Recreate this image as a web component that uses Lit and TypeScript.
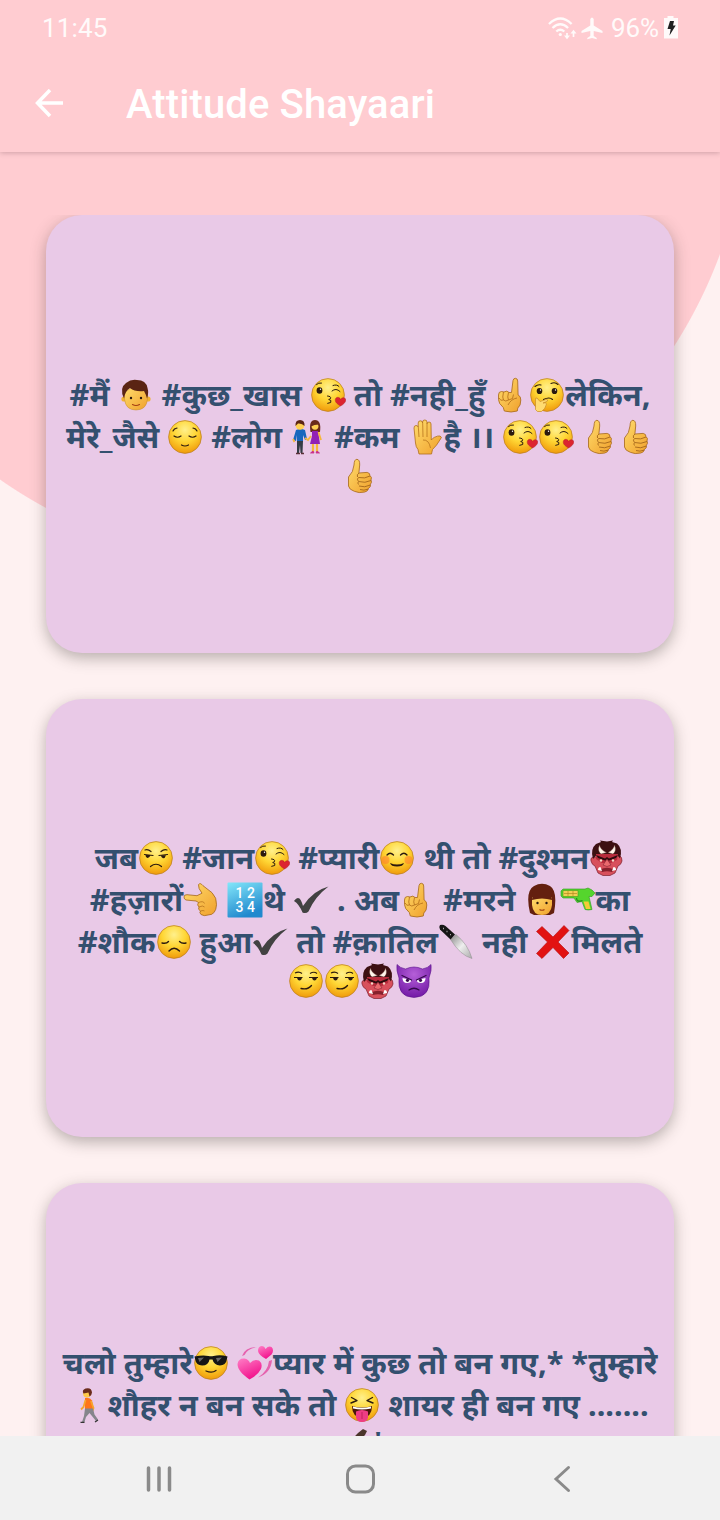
import { LitElement, html, svg, css, SVGTemplateResult } from "lit";
import { customElement } from "lit/decorators.js";

const INK = "#2b1a0e";
const disc = svg`<circle cx="18" cy="18" r="16.4" fill="url(#face)" stroke="#b87a1c" stroke-width=".7"/>`;
const kiss = svg`${disc}<ellipse cx="9.500" cy="13.500" rx="2.900" ry="3.200" fill="${INK}"/><circle cx="10.500" cy="12.3" r=".7" fill="#fff"/>
  <path d="M6.500 7.500q2-2 5-1.500M22 14q4-3.500 8 .5M23 8.500q4-1.500 6 1" fill="none" stroke="${INK}" stroke-width="1" stroke-linecap="round"/>
  <path d="M17.500 19q4 .3 3 2.700l-1.800.8q3.300.5 2 3l-3 .8" fill="none" stroke="${INK}" stroke-width="1" stroke-linecap="round"/>
  <path d="M30.500 29c-4-2.300-5.500-4.200-5.200-6.500.6-3 4.300-2.700 5.200-.2 1.800-2.600 5.500-1.800 5.300.8-.2 2.200-2.300 4.500-5.300 5.900z" fill="#dc2430" stroke="#a9131f" stroke-width=".4"/>`;
const ogre = svg`<path d="M4 17q-3 1-2 4 1 4 4 5l3 7 5 2.500h7l5-2.500 3-7q3-1 4-5 0-4-2-5z" fill="#d8505c" stroke="#7d1f2c" stroke-width=".7"/>
  <path d="M4 19Q1 9 7 4l5-2-1-1.500 7 1 6-1-1 1.500 5 1.500q6 5 3 15l-3-4H8z" fill="#3d1012"/>
  <path d="M7 14l22 0-1 6-6 3h-9l-6-4z" fill="#b82c3c"/>
  <path d="M12 14Q8 11 10.500 5q1 5 7 7.500zM24 14q4-3 1.500-9-1 5-6.500 7.500z" fill="#fff6ea" stroke="#6b3b32" stroke-width=".4"/>
  <path d="M7 15l9 3.500 2-1.500 2 1.500 9-3.500-2 3-7 2.500h-4L9 18z" fill="#2c0b0d"/><circle cx="12" cy="20.500" r="1.200" fill="#f6d9c9"/><circle cx="24" cy="20.500" r="1.200" fill="#f6d9c9"/>
  <path d="M18 19l4 6q-4 3-8 0z" fill="#ea6a6e" stroke="#852232" stroke-width=".6"/><path d="M11 29.500q7-3.500 14 0l-2 2.500q-5-1.500-10 0z" fill="#86202c"/>
  <path d="M9 30q0-3 2.500-3l1.500 4zM27 30q0-3-2.500-3L23 31z" fill="#fff"/>`;
const smirk = svg`${disc}<path d="M7 10q4-2 7 .5M22 10.500q4-2.500 7 0" fill="none" stroke="${INK}" stroke-width="1.100"/>
  <path d="M6 14.500h8.500M21 14.500h9" stroke="${INK}" stroke-width="1.200"/><path d="M9 14.500h5q-.5 3-2.500 3T9 14.500zM24 14.500h5q-.5 3-2.500 3T24 14.500z" fill="${INK}"/>
  <path d="M13 25.500q7 1.500 10.500-3" fill="none" stroke="${INK}" stroke-width="1.300" stroke-linecap="round"/>`;
const check = svg`<path d="M1 19q3-4.500 5.500-2.500 2 2 3.500 7.500Q20 8.500 35.500 4.500 22 14.500 15.500 29.500q-2.500 2.500-6 1Q6 22 1 19z" fill="#424242"/>`;
const pointUp = svg`<path d="M5.500 18q0-3.500 3-3.500l2.500.5q3-2 5 .5h2.500l1.500-12q.5-2.300 2.500-2.200 2.200.2 2.200 2.700l.4 14q2.700 1 2.700 5 0 6-3 8l-.5 3q-6 2-13 0l-1-3.500q-4.800-4-4.800-8z" fill="url(#skin)" stroke="#a5671b" stroke-width=".8"/>
  <path d="M10.500 15q-1.500 6 0 8M15.500 15.500q-1.500 5 0 7.500M6 21q1.500 3.500 4.500 2 2 2 5 0l4-1.500 1-4M15 28q3-6 9-7" fill="none" stroke="#b8741d" stroke-width=".9"/>`;

const glyphs: Record<string, SVGTemplateResult> = {
  kiss, ogre, smirk, check, up: pointUp,
  man: svg`<circle cx="6" cy="22" r="2.600" fill="#f2b233"/><circle cx="30" cy="22" r="2.600" fill="#f2b233"/><path d="M6.500 15q11.500-9 23 0v7q-1 11-11.500 11T6.500 22z" fill="url(#skin)" stroke="#c58a28" stroke-width=".5"/>
  <path d="M6 21.500Q1 11 8 6q5-4 11-3 9 0 10.500 8 1.500 5-.5 10.500-1-4-3-7.500-9 1-14-3-5 3-6 10.500z" fill="#5a2413"/><circle cx="13" cy="21" r="1.200" fill="${INK}"/><circle cx="23" cy="21" r="1.200" fill="${INK}"/><path d="M14.500 27.500q3.500 2 7 0" fill="none" stroke="#a33e12" stroke-width="1.100" stroke-linecap="round"/>`,
  think: svg`${disc}<ellipse cx="10.500" cy="14" rx="2.800" ry="3.100" fill="${INK}"/><ellipse cx="25.500" cy="14" rx="2.800" ry="3.100" fill="${INK}"/><circle cx="11.500" cy="13" r=".7" fill="#fff"/><circle cx="26.500" cy="13" r=".7" fill="#fff"/><path d="M6 9.500q3-2.500 6-1.500M22 6.500q4-2 7 1M14.500 22.500q6-3 9 0" fill="none" stroke="${INK}" stroke-width="1.100" stroke-linecap="round"/>
  <path d="M6.500 23q-.5-2.500 1.500-2l3 3.500 6-2q3 0 1 2l-4 1.500q3.500-1 3.500 1-1 5-5 7.500-5 1-6-2z" fill="#ffdb70" stroke="#c98a2a" stroke-width=".7"/>`,
  relief: svg`${disc}<path d="M7 17q3.500 2.500 7 0M22 17q3.500 2.500 7 0M6 12q1-2.500 4-3M26 9q3 .5 4 3M14.500 26q3.500 2 7 0" fill="none" stroke="${INK}" stroke-width="1.200" stroke-linecap="round"/>`,
  couple: svg`<path d="M6 11q5-2 9 0l2 9-2 1-2-5v7H7v-7l-1 6-3-1z" fill="#1767bd"/><path d="M7 22h6l-.5 12h-2L10 26l-1 8H7z" fill="#343c45"/><path d="M3 20l1.500 3M15 19l3 2 3-4" fill="none" stroke="#f6b73a" stroke-width="1.800"/>
  <circle cx="10" cy="6.500" r="4.300" fill="#ffd052"/><path d="M5.500 7Q5 1 10 1t4.500 6Q12 4 8 4.500z" fill="#5a2413"/>
  <path d="M20.500 13q-2-12 4.500-12t5 12z" fill="#6b2b1b"/><circle cx="25" cy="7.300" r="3.400" fill="#ffd052"/><path d="M21 4.500q4-4.500 8 1-5 0-8 2z" fill="#6b2b1b"/>
  <path d="M22 12h6l2 13H20l2-8z" fill="#9121b5"/><path d="M28.500 13l2.500 8" stroke="#f6b73a" stroke-width="1.800"/><path d="M23 25v8M27 25v8" stroke="#f6b73a" stroke-width="2.200"/><path d="M20.500 34l2.500-2 1 2zM26 34l1-2 2.500 2z" fill="#d42f92" stroke="#c22988" stroke-width=".8"/><path d="M6 34.500h4M11 34.500h3" stroke="#5b3038" stroke-width="1.300"/>`,
  hand: svg`<path d="M7.500 24L6 9q0-2.500 2-2.500T10.200 8V4q0-2.200 2.200-2.200t2.200 2.200V3q0-2 2.200-2T19 3v2q0-2 2-2t2 2l.3 16q1-1.500 3-2.600Q30 16.500 32 17q2.500 1 .5 3-4 7-8 10.500l-1 4.500H11l-1-4.500q-2.200-2.500-2.500-6.500z" fill="url(#skin)" stroke="#b06f1c" stroke-width=".8"/><path d="M10.300 8l.7 10M14.700 4l.3 14M19 5v13M15 21q6-.5 7.500 8" fill="none" stroke="#b8741d" stroke-width=".8"/>`,
  thumb: svg`<path d="M6.500 19q5-5 5.500-12 .2-5.700 2.900-5.700 3 .2 2.800 5.700l-.8 8 8.300-.6q3 .6 2.800 3.300 2.300 1.300 1 4.300 1.400 2.300-.6 4.300.6 3-2 4-.3 3-3.600 3.700-6 1.500-10.500-.7Q7 31.500 6.500 28z" fill="url(#skin)" stroke="#a5671b" stroke-width=".8"/>
  <path d="M17 15q-2.500 1.500-1.500 4M28 18q-5 3-11.500 1.500-2 1.500-.3 3.500M29 22.500q-6 3-12.500 1-1.300 1.500 0 3M28.500 27q-6 3-11.500 1M26.600 31q-5 2-8.600.5" fill="none" stroke="#a5671b" stroke-width=".9"/>`,
  unamused: svg`${disc}<path d="M7 10q3-1 6 1.500M23 11.500q3-2.500 6-1.500M6.500 14.500l8.500 1M21 15.500l8.500-1M12.500 26.500q5.500-4.500 11 0" fill="none" stroke="${INK}" stroke-width="1.200" stroke-linecap="round"/><path d="M7.500 15h5q-1 3.200-3 3t-2-3zM23 15.300h5q-1 3.200-3 3t-2-3z" fill="${INK}"/>`,
  blush: svg`${disc}<circle cx="6.500" cy="20" r="4" fill="#ff7b2f" opacity=".55"/><circle cx="29.500" cy="20" r="4" fill="#ff7b2f" opacity=".55"/><path d="M8 15q3-3.500 6.500 0M21.500 15q3.500-3.500 6.500 0" fill="none" stroke="${INK}" stroke-width="1.300" stroke-linecap="round"/><path d="M11 23q7 3 14 0-1 3.600-7 3.600T11 23z" fill="${INK}"/>`,
  left: svg`<path d="M1 15q0-2.500 3-2.300l10 1 5-2.500q-4-5-3.500-8.500 1.500-2.600 4.500 1l9 7q5 5 4.500 12Q33 33 25 33q-4 1.500-7-.5-2-2-.5-3.500-3-1.500-1.500-4-2.500-2-.5-4.500L13 19l-10-1q-2-.7-2-3z" fill="url(#skin)" stroke="#a5671b" stroke-width=".8"/><path d="M15.500 20.500q5-2 6 1M16 25q4-2 5.500 0M17.500 29q3-1 4 0" fill="none" stroke="#b8741d" stroke-width=".8"/>`,
  numbers: svg`<rect x=".5" y=".5" width="35" height="35" rx="1" fill="url(#blue)"/><text class="digits" x="12.500" y="15.500">1</text><text class="digits" x="24" y="15.500">2</text><text class="digits" x="12.500" y="29.500">3</text><text class="digits" x="24" y="29.500">4</text>`,
  woman: svg`<path d="M6 31Q1 9 10 4q8-4.500 16 0 8 5 4 27l-4 2H10z" fill="#64200f"/><path d="M8 15h20v8q-1 10-10 10T8 23z" fill="url(#skin)"/><path d="M8 18l1-9h18l1 9q-10-3-20 0z" fill="#64200f"/><circle cx="13.500" cy="21" r="1.200" fill="${INK}"/><circle cx="22.500" cy="21" r="1.200" fill="${INK}"/><path d="M15.500 27.500q2.500 1.500 5 0" fill="none" stroke="#a33e12" stroke-width="1.200"/>`,
  gun: svg`<path d="M1 9l2-2h22l3-1 4 2 3 3-3 3.500h-3l3 13q-4 1-7 0l-3-8-5 1-3-4.500H3L1 14z" fill="#55d52d" stroke="#319a1c" stroke-width=".6"/><path d="M3 8.500h15v6H3z" fill="#f3cf55" stroke="#4a9c1b" stroke-width=".6"/><path d="M4 11.500h13M8 9v5M13 9v5" stroke="#b38a20" stroke-width=".7"/><path d="M23.500 19.500h5l2 7.500h-4.500z" fill="#f4cb35"/><path d="M16.500 16q0 4.500 6 2.500" fill="none" stroke="#258b22" stroke-width="1.200"/>`,
  sad: svg`${disc}<path d="M6 19q4.500 1 6.500-1.500M23.500 17.500q2.500 2.500 6.500 1.500M13 27q5-5.500 10.500 0" fill="none" stroke="${INK}" stroke-width="1.400" stroke-linecap="round"/>`,
  knife: svg`<path d="M12.500 15.500l5.500-5q12 10 16 24-11.500-3-21.500-19z" fill="url(#steel)" stroke="#8b8b8b" stroke-width=".5"/><path d="M2 1q3-1 5.500 1l9.500 8.500-4.500 5L2 5.500q-1.500-2.500 0-4.500z" fill="#161616"/><path d="M5 4.500h1M8.500 7.500h1M12 10.700h1" stroke="#aaa" stroke-width="1.300"/>`,
  cross: svg`<path d="M1.500 7.500l5.500-5 11 10.500L29 1.500l5 5-11 11.500 11 11-5.500 5.500L18 23.500 7 34.500l-5.500-5L12.500 18z" fill="#e21212" stroke="#b30b0b" stroke-width=".6"/>`,
  imp: svg`<path d="M3 15Q0 7 1 1.500 4 5 9.500 6q8.500-4 17 0 5.500-1 8.500-4.500 1 5.500-2 13.500 2 19-15 19.500Q1 34 3 15z" fill="url(#violet)" stroke="#5b148c" stroke-width=".6"/><path d="M6.500 15q0 5 4.500 5t4-3zM29.500 15q0 5-4.500 5t-4-3z" fill="#fff"/><path d="M6 12.500l9.500 4.500M30 12.500L20.500 17M13 27q5-3.500 10 0" fill="none" stroke="#35094c" stroke-width="1.300" stroke-linecap="round"/><circle cx="11.500" cy="17.300" r="1.600" fill="#35094c"/><circle cx="24.500" cy="17.300" r="1.600" fill="#35094c"/>`,
  cool: svg`${disc}<path d="M1.500 11.500q8-1.500 14-.5 2.500.5 5 0 7-1.500 14 .5l-.6 2.500q-1 6.500-7 6.500-6-.5-7.400-6h-3q-1 6-7.400 6-6 0-7-6.500z" fill="#151515"/><path d="M5 13l6-.5-4.500 4.500zM23 13l6-.5-4.500 4.500z" fill="#666"/><path d="M13 26q6 2.500 10-.5" fill="none" stroke="${INK}" stroke-width="1.300" stroke-linecap="round"/>`,
  hearts: svg`<path d="M12.500 34.500C5 29 .5 24.500.5 19q1-6 7-5.500 4 .5 5.500 4.500 4-4.500 9-2.500 4 3 2 8.500-3 6-11.500 10.500z" fill="url(#rose)"/><path d="M29 14q-7.500-4-8-8 0-4.500 3.500-5 3 0 4 3 3-3.500 6-2 3 3 0 7.500z" fill="url(#rose)"/><path d="M5 11Q8 2 20 2 10 4 7.500 10zM35 15q-1 13-14 17.500Q31 26 32 16z" fill="#e562ae"/>`,
  walk: svg`<circle cx="16" cy="6.500" r="3.900" fill="#ffc848"/><path d="M12.500 6.500Q10.500 3 14.500 1.500q6-1.500 6.500 4 0 2-2.500 4l-1-4z" fill="#6b2b1b"/><path d="M14 11q5-1 7 2.500L22.500 22H14z" fill="#ff7519"/><path d="M14.500 13l-2 7-2.500 2.500M20 14l2.500 7-1 3" fill="none" stroke="#f5a62d" stroke-width="1.800"/>
  <path d="M14 21.500h8l1.500 6 3.500 5-2 1.500-6.500-8-3.500 4-1.500 5H11l2-6z" fill="#85858c"/><path d="M9.500 35.500h4M24 35l3-2" stroke="#333" stroke-width="1.300"/>`,
  tongue: svg`${disc}<path d="M7.500 10.500l5.500 3-6 2.500M28.500 10.500l-5.500 3 6 2.500" fill="none" stroke="${INK}" stroke-width="1.400" stroke-linecap="round" stroke-linejoin="round"/><path d="M8 19q10 3 20 0 0 11-10 12Q8 30 8 19z" fill="#4b160c"/><path d="M9 19.500q9 2.500 18 0v2q-9 2-18 0z" fill="#fff"/><path d="M12 24.500q6-3 12 0v6q-1 4.500-6 4.500t-6-4.500z" fill="#ee3d84"/><path d="M18 25v7" stroke="#c4215f"/>`,
  pen: svg`<path d="M3 33Q14 17 24 7l5-4 4 2-2 4-20 20z" fill="#4b352b"/>`,
};

type Part = string | { e: string };
const E = (e: string): Part => ({ e });

const cards: Part[][][] = [
  [
    ["#मैं ", E("man"), " #कुछ_खास ", E("kiss"), " तो #नही_हुँ ", E("up"), E("think"), "लेकिन,"],
    ["मेरे_जैसे ", E("relief"), " #लोग ", E("couple"), " #कम ", E("hand"), "है ।। ", E("kiss"), E("kiss"), " ", E("thumb"), E("thumb")],
    [E("thumb")],
  ],
  [
    ["जब", E("unamused"), " #जान", E("kiss"), " #प्यारी", E("blush"), " थी तो #दुश्मन", E("ogre")],
    ["#हज़ारों", E("left"), " ", E("numbers"), "थे ", E("check"), " . अब", E("up"), " #मरने ", E("woman"), E("gun"), "का"],
    ["#शौक", E("sad"), " हुआ", E("check"), " तो #क़ातिल", E("knife"), " नही ", E("cross"), "मिलते"],
    [E("smirk"), E("smirk"), E("ogre"), E("imp")],
  ],
  [
    ["चलो तुम्हारे", E("cool"), " ", E("hearts"), "प्यार में कुछ तो बन गए,* *तुम्हारे"],
    [E("walk"), "शौहर न बन सके तो ", E("tongue"), " शायर ही बन गए ......."],
    [E("pen"), "*"],
  ],
];

const isShort = (line: Part[]) => line.every((p) => typeof p !== "string" || p === "*");

@customElement("app-root")
export class AppRoot extends LitElement {
  static styles = css`
    :host { display: flex; flex-direction: column; width: 720px; height: 1520px; overflow: hidden; background: #fef1f1; font-family: Roboto, sans-serif; }
    .defs { width: 0; height: 0; display: block; }
    .top { flex: none; background: #ffccd1; box-shadow: 0 1px 5px rgba(70, 40, 50, .26); z-index: 1; }
    .status { height: 56px; box-sizing: border-box; padding: 0 41px 0 42px; display: flex; align-items: center; justify-content: space-between; color: #fffafa; font-size: 26px; letter-spacing: .15px; }
    .tray { display: flex; align-items: center; }
    .tray svg { display: block; }
    .pct { margin: 0 4px 0 6px; letter-spacing: -.1px; }
    .bar { height: 96px; box-sizing: border-box; padding: 0 34px; display: flex; align-items: center; gap: 62px; color: #fff; }
    h1 { margin: 0; padding-top: 2px; font-size: 40px; font-weight: 500; letter-spacing: .12px; line-height: 48px; }
    main { flex: 1; min-height: 0; display: flex; flex-direction: column; padding-top: 63px; background: radial-gradient(circle at 273px -63px, #ffccd1 476px, #fef1f1 477px); }
    .list { flex: 1; min-height: 0; overflow: hidden; display: flex; flex-direction: column; gap: 46px; padding: 0 46px; }
    .card { flex: none; height: 438px; border-radius: 36px; background: #e9c9e7; box-shadow: 0 5px 15px rgba(50, 45, 40, .34); display: flex; flex-direction: column; align-items: center; justify-content: center; color: #34506f; font-family: "Noto Sans", "Noto Sans Devanagari", sans-serif; font-size: 30.8px; font-weight: 700; }
    .line { height: 42px; display: flex; align-items: center; white-space: pre; line-height: 42px; }
    .line.short { height: 36px; }
    .words { padding-bottom: 3px; }
    .emoji { width: 36px; height: 36px; flex: none; display: block; }
    .digits { font: 500 14px Roboto, sans-serif; fill: #fff; text-anchor: middle; }
    nav { height: 84px; flex: none; box-sizing: border-box; padding: 1px 0 0 1px; background: #f1f1f1; display: flex; justify-content: center; align-items: center; gap: 170px; z-index: 1; }
    nav svg { display: block; }
  `;

  private part(p: Part) {
    return typeof p === "string"
      ? html`<span class="words">${p}</span>`
      : html`<svg class="emoji" viewBox="0 0 36 36">${glyphs[p.e]}</svg>`;
  }

  render() {
    return html`
      <svg class="defs"><defs>
        <radialGradient id="face" cx=".5" cy=".28" r=".72"><stop offset="0" stop-color="#fff08c"/><stop offset=".5" stop-color="#ffd634"/><stop offset="1" stop-color="#f09a0b"/></radialGradient>
        <linearGradient id="skin" x2="1" y2="1"><stop stop-color="#ffdc6c"/><stop offset="1" stop-color="#f0a02c"/></linearGradient>
        <linearGradient id="blue" x2=".4" y2="1"><stop stop-color="#83e7fa"/><stop offset="1" stop-color="#2189ce"/></linearGradient>
        <linearGradient id="steel" x2="1" y2="1"><stop stop-color="#888"/><stop offset=".5" stop-color="#eee"/><stop offset="1" stop-color="#aaa"/></linearGradient>
        <radialGradient id="violet" cx=".5" cy=".3" r=".7"><stop stop-color="#b55fd8"/><stop offset="1" stop-color="#731aa6"/></radialGradient>
        <linearGradient id="rose" x2=".5" y2="1"><stop stop-color="#ff7fc6"/><stop offset="1" stop-color="#f2128d"/></linearGradient>
      </defs></svg>
      <div class="top">
        <div class="status">
          <span>11:45</span>
          <div class="tray">
            <svg width="32" height="24" viewBox="0 0 32 24" fill="none" stroke="#fffafa" stroke-width="2.300"><path d="M2 8Q13.300 -3 24.600 8M5.500 12q7.800-7.500 15.600 0M9.300 15.500q4-3.500 8 0"/><circle cx="13.300" cy="18.500" r="1.600" fill="#fffafa" stroke="none"/><path d="M20 17v4M26.500 21v-5" stroke-width="1.700"/><path d="M17 19.500h6l-3 3.800zM23.500 17.500h6l-3-3.800z" fill="#fffafa" stroke="none"/></svg>
            <svg width="26" height="24" viewBox="0 0 26 24"><path d="M11.300 3q1.700-3 3.400 0v6.500L23.500 15v2L14.700 15v5l3 2v1.300L13 22l-4.700 1.300V22l3-2v-5L2.500 17v-2l8.800-5.500z" fill="#fffafa"/></svg>
            <span class="pct">96%</span>
            <svg width="16" height="24" viewBox="0 0 16 24"><path d="M4.500 0h6v2H15v20.500H1V2h3.500z" fill="#fffafa"/><path d="M7 5h4l-1 4.500h2.700L6.500 19.500l1.200-6.500H4.500z" fill="#202020"/></svg>
          </div>
        </div>
        <div class="bar">
          <svg width="30" height="30" viewBox="0 0 30 30" fill="none" stroke="#fff" stroke-width="3.500"><path d="M16 1L3.500 14 16 27M3 14h26"/></svg>
          <h1>Attitude Shayaari</h1>
        </div>
      </div>
      <main><div class="list">
        ${cards.map((lines) => html`<section class="card">${lines.map((l) => html`<div class="line ${isShort(l) ? "short" : ""}">${l.map((p) => this.part(p))}</div>`)}</section>`)}
      </div></main>
      <nav>
        <svg width="32" height="32" viewBox="0 0 32 32" stroke="#8a8a8a" stroke-width="3.500" stroke-linecap="round"><path d="M5.500 5v22M16 5v22M26.500 5v22"/></svg>
        <svg width="32" height="32" viewBox="0 0 32 32" fill="none" stroke="#8a8a8a" stroke-width="3"><rect x="2.500" y="3" width="26" height="26" rx="8"/></svg>
        <svg width="32" height="32" viewBox="0 0 32 32" fill="none" stroke="#8a8a8a" stroke-width="3" stroke-linecap="round"><path d="M21.500 4.500L9 16 21.500 27.500"/></svg>
      </nav>`;
  }
}
